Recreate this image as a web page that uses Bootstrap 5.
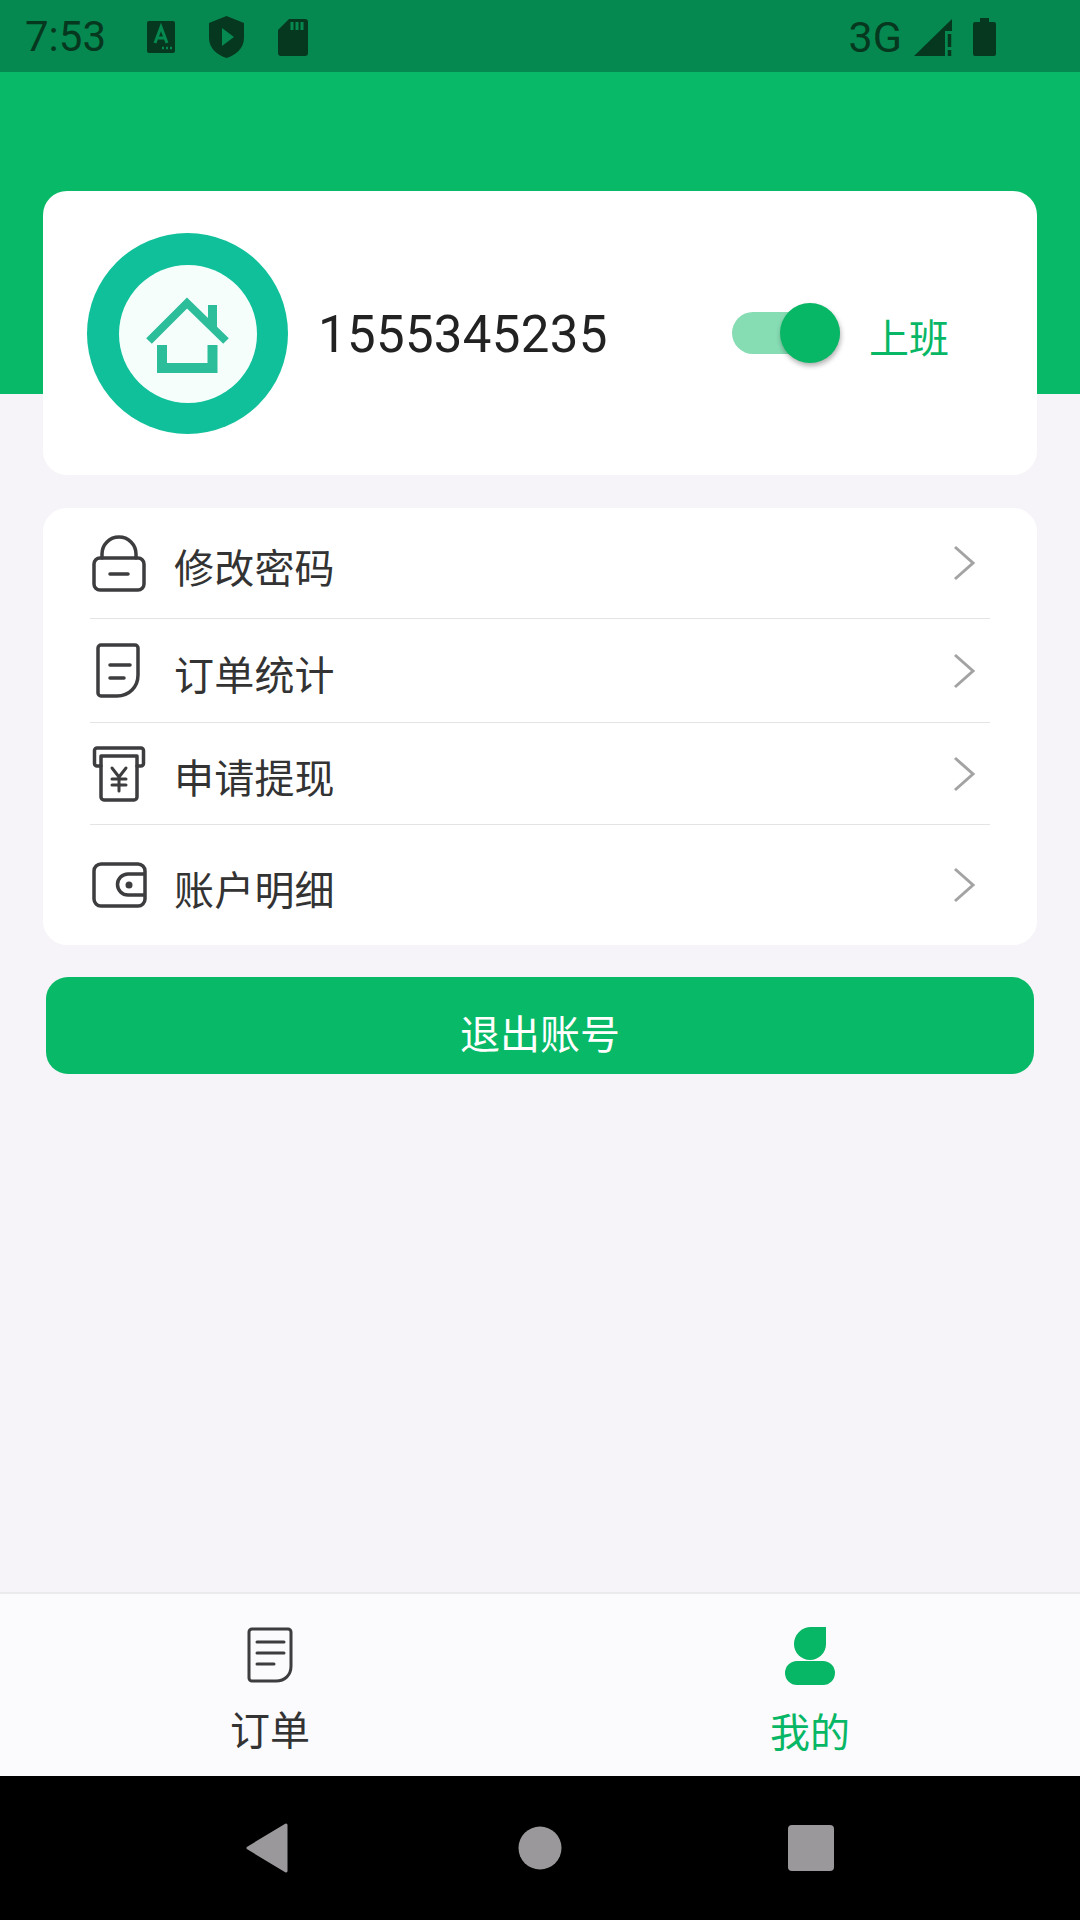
<!DOCTYPE html>
<html lang="zh">
<head>
    <meta charset="UTF-8">
    <meta name="viewport" content="width=device-width, initial-scale=1.0">
    <title>我的</title>
    <link href="https://cdn.jsdelivr.net/npm/bootstrap@5.3.0/dist/css/bootstrap.min.css" rel="stylesheet">
    <script src="https://cdn.jsdelivr.net/npm/bootstrap@5.3.0/dist/js/bootstrap.bundle.min.js"></script>
    <style>
        html, body { width: 1080px; height: 1920px; overflow: hidden; }
        body {
            background: #f6f4f8;
            color: #333;
            font-family: Roboto, "Noto Sans CJK SC", sans-serif;
        }
        .app-page { height: 1920px; }

        /* status bar */
        .status-bar { height: 72px; background: #068950; color: #06381f; padding: 2px 84px 0 25px; }
        .status-time { font-size: 42px; line-height: 1; width: 122px; }
        .status-net { font-size: 43px; line-height: 1; margin-right: 12px; }

        .top-green { height: 322px; background: #08ba67; }
        .main-area { margin-top: -203px; padding: 0 43px; }

        /* profile card */
        .profile-box { height: 284px; background: #fff; border-radius: 24px; padding: 0 44px; }
        .avatar-ring { width: 201px; height: 201px; flex: none; }
        .avatar-soft { filter: blur(.7px); }
        .phone-no { font-size: 51px; line-height: 1; color: #222; margin: 2px 0 0 30px; letter-spacing: .3px; }
        .work-switch { position: relative; width: 108px; height: 42px; background: #86dcb3; border-radius: 21px; margin-left: auto; }
        .work-thumb {
            position: absolute; left: 48px; top: -9px; width: 60px; height: 60px;
            border-radius: 50%; background: #08b765; box-shadow: 1px 3px 5px rgba(0, 0, 0, .3);
        }
        .work-label { font-size: 40px; line-height: 1; color: #08b765; margin: 13px 44px 0 29px; }

        /* menu list */
        .menu-box { margin-top: 33px; background: #fff; border-radius: 24px; padding: 0 47px; border: 0; }
        .menu-row { display: flex; align-items: center; padding: 0; background: transparent; border-color: #e4e3e6; color: #333; }
        .row-a { height: 111px; }
        .row-b { height: 104px; }
        .row-c { height: 102px; }
        .row-d { height: 120px; }
        .menu-icon { width: 60px; flex: none; display: block; margin-left: 2px; }
        .menu-text { font-size: 40px; line-height: 1; margin-left: 22px; padding-top: 13px; letter-spacing: .2px; }
        .menu-arrow { margin-left: auto; margin-right: 14px; display: block; }

        .logout-btn {
            display: block; width: 988px; height: 97px; margin: 32px 0 0 3px;
            background: #08ba67; border: 0; border-radius: 22px; color: #fff; font-size: 40px; line-height: 1; padding: 20px 0 0;
        }
        .logout-btn:hover { background: #08ba67; color: #fff; }

        /* bottom tabs */
        .tab-bar { height: 184px; background: #fbfafd; border-top: 2px solid #ebeaed; }
        .tab-item { width: 540px; padding-top: 33px; font-size: 40px; line-height: 1; color: #333; }
        .tab-on { color: #08b765; }
        .tab-item span { margin-top: 29px; }

        .sys-nav { height: 144px; background: #000; }
    </style>
</head>

<body>
    <div class="app-page d-flex flex-column">
        <div class="status-bar d-flex align-items-center">
            <span class="status-time">7:53</span>
            <div class="d-flex align-items-center gap-4">
                <svg width="28" height="32" viewBox="0 0 28 32"><rect width="28" height="32" rx="2" fill="#06381f"/><path d="M8 22 14 6l6 16M10 17h8" fill="none" stroke="#068950" stroke-width="3"/><path d="M15 27h2m2 0h2m2 0h2" stroke="#068950" stroke-width="2.5"/></svg>
                <svg width="35" height="42" viewBox="0 0 35 42" style="margin-left:10px"><path d="M17.5 0 35 7v15c0 10-8 17-17.500 20C8 39 0 32 0 22V7Z" fill="#06381f"/><path d="M13 12 25 21 13 30Z" fill="#068950"/></svg>
                <svg width="30" height="37" viewBox="0 0 30 37" style="margin-left:10px"><path d="M11 0h16a3 3 0 0 1 3 3v31a3 3 0 0 1-3 3H3a3 3 0 0 1-3-3V11Z" fill="#06381f"/><path d="M14 3v8m5-8v8m5-8v8" stroke="#068950" stroke-width="3"/></svg>
            </div>
            <div class="ms-auto d-flex align-items-center">
                <span class="status-net">3G</span>
                <svg width="38" height="37" viewBox="0 0 38 37" style="margin-right:21px"><path d="M0 37 38 0V12H31V37Z" fill="#06381f"/><path d="M35.500 15v13m0 3v6" stroke="#06381f" stroke-width="3.500"/></svg>
                <svg width="23" height="38" viewBox="0 0 23 38"><path d="M7 0h9v4h5a2 2 0 0 1 2 2v30a2 2 0 0 1-2 2H2a2 2 0 0 1-2-2V6a2 2 0 0 1 2-2h5Z" fill="#06381f"/></svg>
            </div>
        </div>
        <div class="top-green"></div>

        <div class="main-area flex-grow-1">
            <div class="profile-box d-flex align-items-center">
                <svg class="avatar-ring" viewBox="0 0 201 201">
                    <circle cx="100.500" cy="100.500" r="100.500" fill="#10c09a"/>
                    <g class="avatar-soft">
                        <circle cx="101" cy="101" r="69" fill="#f6fefc"/>
                        <g fill="none" stroke="#2cbd9a">
                            <path d="M62 108 100 70 139 108" stroke-width="8"/>
                            <path d="M125.500 72V95" stroke-width="9"/>
                            <path d="M75 112V135H125.500V112" stroke-width="10"/>
                        </g>
                    </g>
                </svg>
                <span class="phone-no">1555345235</span>
                <div class="work-switch"><div class="work-thumb"></div></div>
                <span class="work-label">上班</span>
            </div>

            <ul class="list-group list-group-flush menu-box">
                <li class="list-group-item menu-row row-a">
                    <span class="menu-icon"><svg width="54" height="58" viewBox="0 0 54 58" class="d-block"><g fill="none" stroke="#3d3d3f" stroke-width="3.500" stroke-linecap="round"><rect x="2" y="24" width="50" height="32" rx="6"/><path d="M10 24V20a17 17 0 0 1 34 0v4M18 40h18"/></g></svg></span>
                    <span class="menu-text">修改密码</span>
                    <svg class="menu-arrow" width="24" height="36" viewBox="0 0 24 36"><path d="M3 2 21 18 3 34" fill="none" stroke="#a3a3a3" stroke-width="3"/></svg>
                </li>
                <li class="list-group-item menu-row row-b">
                    <span class="menu-icon"><svg width="56" height="56" viewBox="0 0 56 56" class="d-block"><g fill="none" stroke="#3d3d3f" stroke-width="3.500" stroke-linecap="round"><path d="M9 2h34a3 3 0 0 1 3 3v27c0 12-9 21-21 21H9a3 3 0 0 1-3-3V5a3 3 0 0 1 3-3Z"/><path d="M18 22h20M18 35h14"/></g></svg></span>
                    <span class="menu-text">订单统计</span>
                    <svg class="menu-arrow" width="24" height="36" viewBox="0 0 24 36"><path d="M3 2 21 18 3 34" fill="none" stroke="#a3a3a3" stroke-width="3"/></svg>
                </li>
                <li class="list-group-item menu-row row-c">
                    <span class="menu-icon"><svg width="56" height="56" viewBox="0 0 56 56" class="d-block"><g fill="none" stroke="#3d3d3f" stroke-width="3.500" stroke-linecap="round" stroke-linejoin="round"><path d="M9 20H5a2.500 2.500 0 0 1-2.500-2.500V4.500A2.500 2.500 0 0 1 5 2h44a2.500 2.500 0 0 1 2.500 2.500v13A2.500 2.500 0 0 1 49 20h-4"/><path d="M9 10h36v41a3 3 0 0 1-3 3H12a3 3 0 0 1-3-3Z"/><path d="M20 22l7 9 7-9M27 31v14M20 33h14M20 39h14" stroke-width="3"/></g></svg></span>
                    <span class="menu-text">申请提现</span>
                    <svg class="menu-arrow" width="24" height="36" viewBox="0 0 24 36"><path d="M3 2 21 18 3 34" fill="none" stroke="#a3a3a3" stroke-width="3"/></svg>
                </li>
                <li class="list-group-item menu-row row-d">
                    <span class="menu-icon"><svg width="56" height="46" viewBox="0 0 56 46" class="d-block"><g fill="none" stroke="#3d3d3f" stroke-width="3.500"><rect x="2" y="2" width="51" height="42" rx="7"/><path d="M53 12H36a10 10 0 0 0 0 21h17"/></g><circle cx="37" cy="23" r="3.500" fill="#3d3d3f"/></svg></span>
                    <span class="menu-text">账户明细</span>
                    <svg class="menu-arrow" width="24" height="36" viewBox="0 0 24 36"><path d="M3 2 21 18 3 34" fill="none" stroke="#a3a3a3" stroke-width="3"/></svg>
                </li>
            </ul>

            <button type="button" class="btn logout-btn">退出账号</button>
        </div>

        <div class="tab-bar d-flex">
            <div class="tab-item d-flex flex-column align-items-center">
                <svg width="46" height="56" viewBox="0 0 46 56"><g fill="none" stroke="#3d3d3f" stroke-width="3" stroke-linecap="round"><path d="M5 2h36a3 3 0 0 1 3 3v34c0 9-6 15-15 15H5a3 3 0 0 1-3-3V5a3 3 0 0 1 3-3Z"/><path d="M10 15h27M10 26h27M10 37h17"/></g></svg>
                <span>订单</span>
            </div>
            <div class="tab-item tab-on d-flex flex-column align-items-center">
                <svg width="50" height="58" viewBox="0 0 50 58"><path d="M41 0v17a16 16 0 0 1-32 0A17 17 0 0 1 26 0Z" fill="#08b765"/><rect x="0" y="34" width="50" height="24" rx="12" fill="#08b765"/></svg>
                <span>我的</span>
            </div>
        </div>

        <div class="sys-nav d-flex align-items-center">
            <svg width="44" height="50" viewBox="0 0 44 50" style="margin-left:245px"><path d="M41 2 3 25 41 48Z" fill="#9a989b" stroke="#9a989b" stroke-width="3" stroke-linejoin="round"/></svg>
            <svg width="44" height="44" viewBox="0 0 44 44" style="margin-left:229px"><circle cx="22" cy="22" r="21.500" fill="#9a989b"/></svg>
            <svg width="46" height="46" viewBox="0 0 46 46" style="margin-left:226px"><rect width="46" height="46" rx="4" fill="#9a989b"/></svg>
        </div>
    </div>
</body>
</html>
